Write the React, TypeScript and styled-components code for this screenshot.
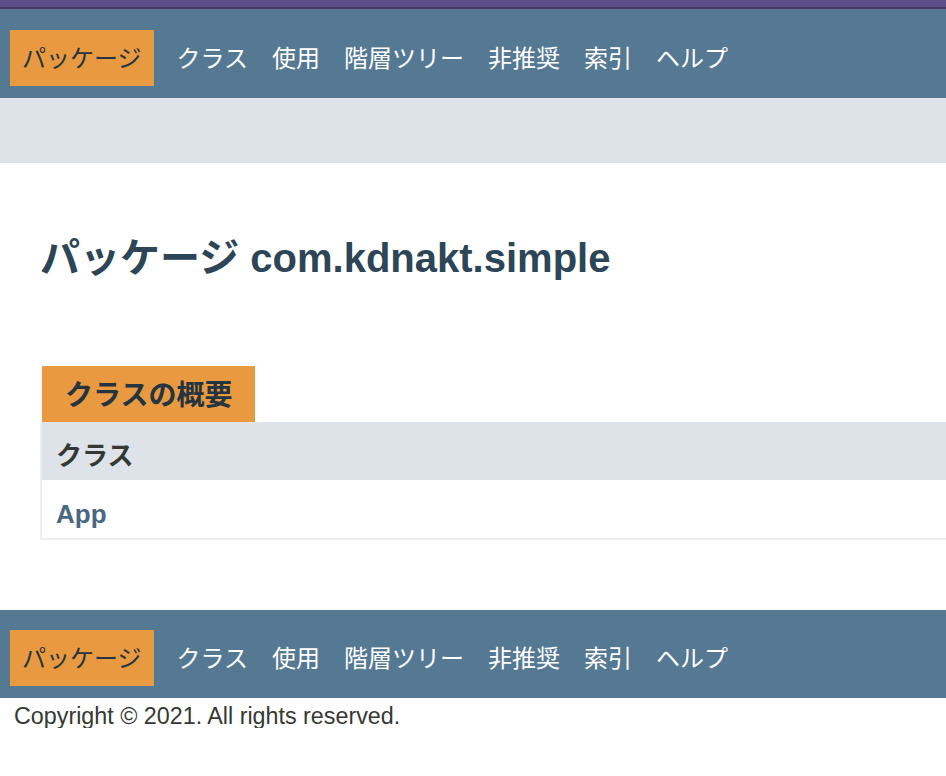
import React from "react";
import styled, { createGlobalStyle } from "styled-components";

const GlobalStyle = createGlobalStyle`
  html, body {
    margin: 0;
    padding: 0;
    background: #ffffff;
    overflow-x: hidden;
  }
  body {
    font-family: "Liberation Sans", "Noto Sans CJK JP", sans-serif;
    color: #353833;
  }
`;

const TopStrip = styled.div`
  height: 7px;
  background: #5e4e87;
  border-bottom: 2px solid #463866;
`;

const NavBar = styled.nav<{ $top: number; $height: number }>`
  background: #557893;
  height: ${(p) => p.$height}px;
  box-sizing: border-box;
  padding: ${(p) => p.$top}px 0 0 10px;
`;

const NavList = styled.ul`
  list-style: none;
  margin: 0;
  padding: 0;
  display: flex;
  align-items: center;
`;

const NavItem = styled.li<{ $active?: boolean }>`
  height: 56px;
  box-sizing: border-box;
  display: flex;
  align-items: center;
  padding: 0 12px 3px;
  margin-right: ${(p) => (p.$active ? "11px" : "0")};
  font-size: 24px;
  color: ${(p) => (p.$active ? "#253441" : "#ffffff")};
  background: ${(p) => (p.$active ? "#e99a40" : "transparent")};
  white-space: nowrap;
`;

const SubNav = styled.div`
  height: 65px;
  background: #dee3e9;
`;

const Header = styled.div`
  margin: 0 40px;
  padding-top: 71px;
`;

const Title = styled.h1`
  margin: 0;
  font-size: 40px;
  line-height: 48px;
  font-weight: bold;
  color: #2c4557;
`;

const Content = styled.div`
  padding: 84px 0 70px 40px;
`;

const Caption = styled.div`
  display: inline-block;
  margin-left: 2px;
  padding: 14px 23px 10px;
  height: 32px;
  line-height: 32px;
  font-size: 28px;
  font-weight: bold;
  background: #e99a40;
  color: #253441;
  white-space: nowrap;
`;

const Table = styled.div`
  width: calc(100% + 4px);
  border-left: 2px solid #eeeeee;
  border-bottom: 2px solid #eeeeee;
`;

const Row = styled.div<{ $head?: boolean }>`
  height: 58px;
  box-sizing: border-box;
  padding: 16px 6px 6px 14px;
  line-height: 36px;
  font-size: 26px;
  font-weight: bold;
  background: ${(p) => (p.$head ? "#dee3e9" : "#ffffff")};
  color: ${(p) => (p.$head ? "#353833" : "#4a6782")};
`;

const Copyright = styled.div`
  padding: 6px 0 0 14px;
  font-size: 23.3px;
  line-height: 24px;
  color: #353833;
`;

const items = ["パッケージ", "クラス", "使用", "階層ツリー", "非推奨", "索引", "ヘルプ"];

const Nav = ({ top, height }: { top: number; height: number }) => (
  <NavBar $top={top} $height={height}>
    <NavList>
      {items.map((t, i) => (
        <NavItem key={t} $active={i === 0}>
          {t}
        </NavItem>
      ))}
    </NavList>
  </NavBar>
);

const App = () => {
  return (
    <>
      <GlobalStyle />
      <TopStrip />
      <Nav top={21} height={89} />
      <SubNav />
      <Header>
        <Title>パッケージ com.kdnakt.simple</Title>
      </Header>
      <Content>
        <Caption>クラスの概要</Caption>
        <Table>
          <Row $head>クラス</Row>
          <Row>App</Row>
        </Table>
      </Content>
      <Nav top={20} height={88} />
      <Copyright>Copyright © 2021. All rights reserved.</Copyright>
    </>
  );
};

export default App;
